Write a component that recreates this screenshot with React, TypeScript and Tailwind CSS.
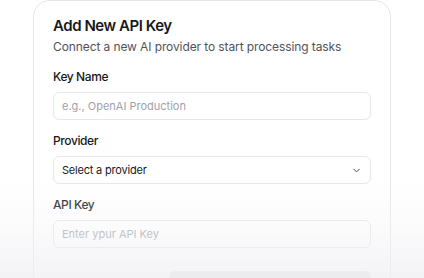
import React from 'react';
import { ChevronDown } from 'lucide-react';

const Field = ({ label, children }: { label: string; children: React.ReactNode }) => (
  <div className="flex flex-col gap-[8px]">
    <label className="text-[12px] font-medium text-[#18181b] leading-[15px] tracking-[-0.4px]">{label}</label>
    {children}
  </div>
);

const App: React.FC = () => {
  return (
    <div className="relative w-[424px] h-[278px] overflow-hidden bg-white" style={{ fontFamily: 'Inter, "Noto Sans", sans-serif' }}>
      <div className="ml-[33px] w-[358px] h-[300px] rounded-t-2xl border border-[#e5e7eb] bg-white px-[19px] pt-[14px]">
        <h2 className="text-[15px] font-semibold text-[#18181b] leading-[22px] tracking-[-0.45px]">Add New API Key</h2>
        <p className="mt-[2px] text-[12px] text-[#52525b] leading-[16px] tracking-[-0.1px]">Connect a new AI provider to start processing tasks</p>

        <div className="mt-[14px] flex flex-col gap-[13px]">
          <Field label="Key Name">
            <input
              placeholder="e.g., OpenAI Production"
              className="h-[28px] w-full rounded-[6px] border border-[#e5e7eb] px-[8px] text-[11px] text-[#18181b] placeholder:text-[#a1a1aa] outline-none"
            />
          </Field>

          <Field label="Provider">
            <div className="h-[28px] w-full rounded-[6px] border border-[#e5e7eb] px-[8px] flex items-center justify-between">
              <span className="text-[11px] tracking-[-0.2px] text-[#18181b]">Select a provider</span>
              <ChevronDown className="w-[11px] h-[11px] text-[#3f3f46]" strokeWidth={2} />
            </div>
          </Field>

          <Field label="API Key">
            <input
              placeholder="Enter ypur API Key"
              className="h-[28px] w-full rounded-[6px] border border-[#e5e7eb] px-[8px] text-[11px] text-[#18181b] placeholder:text-[#a1a1aa] outline-none"
            />
          </Field>
        </div>

        <div className="mt-[23px] flex justify-end">
          <div className="h-[30px] w-[202px] rounded-[6px] bg-[#e4e4e7]" />
        </div>
      </div>

      <div className="pointer-events-none absolute inset-x-0 bottom-0 h-[100px] bg-gradient-to-b from-white/0 via-[#f4f4f6]/35 to-[#efeff2]/75" />
    </div>
  );
};

export default App;
